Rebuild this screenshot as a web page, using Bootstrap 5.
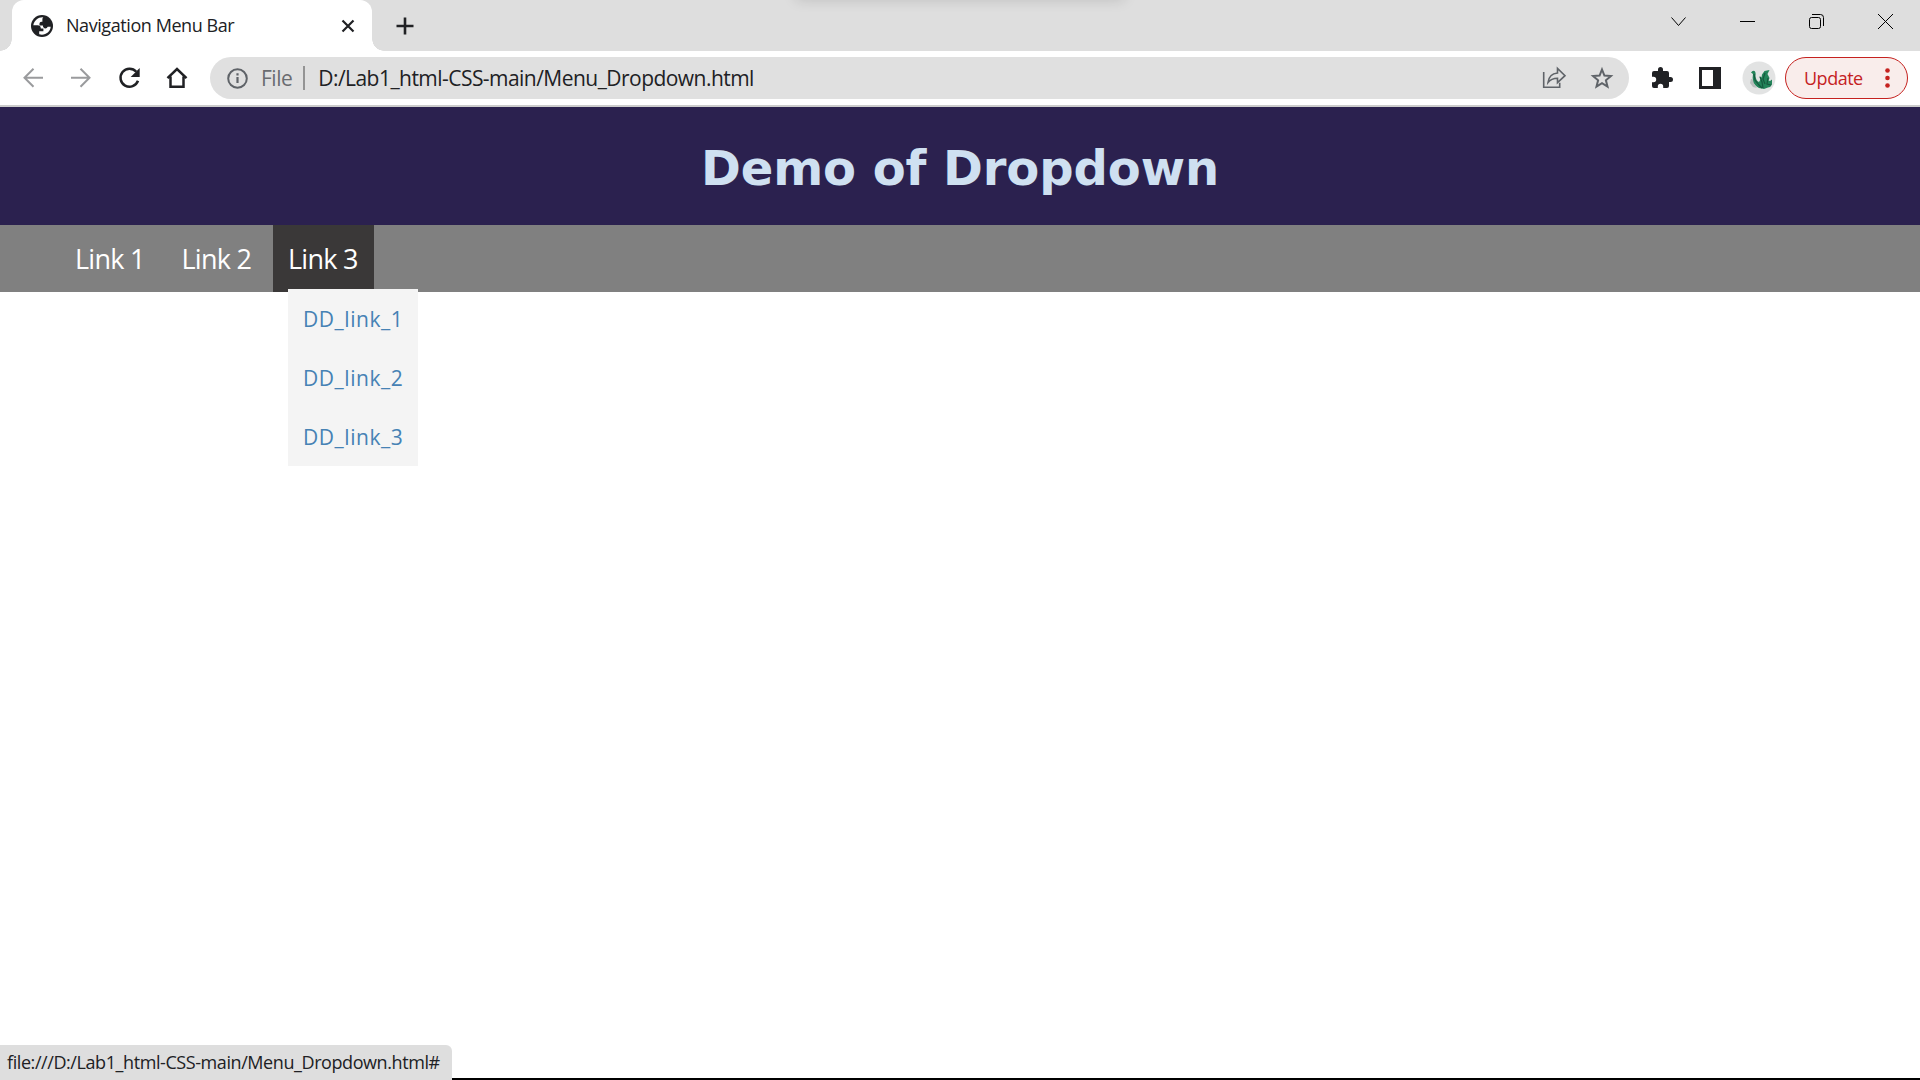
<!DOCTYPE html>
<html lang="en">
<head>
<meta charset="utf-8">
<title>Navigation Menu Bar</title>
<link href="https://cdn.jsdelivr.net/npm/bootstrap@5.3.0/dist/css/bootstrap.min.css" rel="stylesheet">
<style>
body{height:1080px;overflow:hidden;background:#fff;font-family:"Open Sans","Noto Sans",sans-serif;color:#202124}
svg{display:block;flex:none;overflow:visible}
.tabstrip{height:51px;background:#dedede}
.top-shade{left:796px;top:-20px;width:328px;height:20px;box-shadow:0 0 14px rgba(0,0,0,.14)}
.browser-tab{width:360px;margin-left:12px;background:#fff;border-radius:12px 12px 0 0;padding:0 18px 0 19px}
.browser-tab::before,.browser-tab::after{content:"";position:absolute;bottom:0;width:12px;height:12px}
.browser-tab::before{left:-12px;background:radial-gradient(circle at 0 0,transparent 11.5px,#fff 12px)}
.browser-tab::after{right:-12px;background:radial-gradient(circle at 100% 0,transparent 11.5px,#fff 12px)}
.tab-title{font-size:18px;line-height:24px;margin-left:13px;padding-bottom:1px;letter-spacing:-.43px}
.new-tab{margin-left:24px}
.win-controls{gap:54px;padding:0 27px 8px 0}
.toolbar{height:56px;border-bottom:2px solid #ccc;padding:6px 12px 6px 21px}
.tool-nav{gap:24px;margin-right:21px}
.omnibox{width:1419px;height:42px;background:#e0e0e0;border-radius:21px;padding:0 15px}
.scheme,.address{font-size:21px;line-height:28px}
.scheme{color:#6a6c70;margin-left:12px;letter-spacing:-.5px}
.divide{width:2px;height:24px;background:#949494;margin:0 13px 0 11px}
.address{letter-spacing:-.54px}
.avatar-pic{margin:0 9px 0 20px}
.update-btn{width:123px;height:42px;border:1.5px solid #c5221f;border-radius:21px;background:#f9edeb;color:#c5221f;font-size:18px;line-height:24px;padding:0 17px 0 18px}
.update-label{letter-spacing:-.5px;padding-bottom:1px}
.demo-head{height:118px;background:#2b214f;color:#cfe0f1}
.demo-head h1{font:bold 48px/58px "DejaVu Sans",sans-serif;margin:3px 0 0;letter-spacing:-.08px}
.menu-bar{height:67px;background:#808080;padding-left:60px;gap:5.5px}
.menu-item{width:101px}
.menu-item>a{color:#fff;font-size:27px;font-weight:500;line-height:68px;height:67px;padding-left:15px;letter-spacing:-.75px}
.menu-item.is-open{background:#3a3838}
.sub-menu{left:15px;top:64px;width:130px;background:#f4f4f4;z-index:2}
.sub-menu a{height:59px;line-height:61px;padding-left:15px;color:#4682b4;font-size:21px;letter-spacing:.55px}
.status-bubble{width:452px;height:35px;background:#dedede;border-radius:0 6px 0 0;font-size:18px;line-height:35px;padding-left:7px;letter-spacing:-.42px}
.edge-line{height:2px;background:#000}
</style>
<script src="https://cdn.jsdelivr.net/npm/bootstrap@5.3.0/dist/js/bootstrap.bundle.min.js"></script>
</head>
<body class="d-flex flex-column text-nowrap">
<header>
  <div class="tabstrip d-flex align-items-stretch position-relative overflow-hidden">
    <div class="top-shade position-absolute"></div>
    <div class="browser-tab d-flex align-items-center position-relative">
      <svg width="22" height="22" viewBox="0 0 22 22"><circle cx="11" cy="11" r="11" fill="#202124"/><path d="M12.300 2.300C7.500 1.900 3.200 5.300 2.300 10.200H6.500q3.300 0 3.300 3.300h2.600v2.700H8.200v3.100C13.800 21 19.200 17.300 19.700 11.800h-3q-.7 1.600-2.200 1.600-2.600 0-2.600-2.800H8.600q-.8-3.500 2-3.800h.8V4.200q0-1.200.9-1.900z" fill="#fff"/></svg>
      <span class="tab-title">Navigation Menu Bar</span>
      <svg class="ms-auto" width="12" height="12" viewBox="0 0 12 12"><path d="M.5.5l11 11m0-11l-11 11" stroke="#202124" stroke-width="2.2"/></svg>
    </div>
    <svg class="new-tab align-self-center" width="18" height="18" viewBox="0 0 18 18"><path d="M9 .5v17M.5 9h17" stroke="#202124" stroke-width="2.6"/></svg>
    <div class="win-controls d-flex align-items-center ms-auto">
      <svg width="15" height="15" viewBox="0 0 15 15"><path d="M.5 3.500l7 8 7-8" fill="none" stroke="#000" stroke-width="1"/></svg>
      <svg width="15" height="15" viewBox="0 0 15 15"><path d="M0 7.500h15" stroke="#000"/></svg>
      <svg width="15" height="15" viewBox="0 0 15 15"><rect x=".5" y="3.500" width="11" height="11" rx="2" fill="none" stroke="#000"/><path d="M3 .5h8.500q3 0 3 3V12" fill="none" stroke="#000"/></svg>
      <svg width="15" height="15" viewBox="0 0 15 15"><path d="M0 0l15 15M15 0L0 15" stroke="#000"/></svg>
    </div>
  </div>
  <div class="toolbar d-flex align-items-center">
    <div class="tool-nav d-flex align-items-center">
      <svg width="24" height="24" viewBox="0 0 24 24"><path d="M22 11.700H3.500M12.500 2.700l-9 9 9 9" fill="none" stroke="#9a9b9d" stroke-width="2"/></svg>
      <svg width="24" height="24" viewBox="0 0 24 24"><path d="M2 11.700h18.500M11.500 2.700l9 9-9 9" fill="none" stroke="#9a9b9d" stroke-width="2"/></svg>
      <svg width="24" height="24" viewBox="-1 0 24 24"><path d="M20 14.800A9 9 0 1 1 18.300 5.800" fill="none" stroke="#202124" stroke-width="2.500"/><path d="M21.700 2v9h-9z" fill="#202124"/></svg>
      <svg width="24" height="24" viewBox="0 0 24 24"><path d="M2.500 12.200L12 3l9.500 9.200M5.500 10.500v10.300h13V10.500" fill="none" stroke="#202124" stroke-width="2.500"/></svg>
    </div>
    <div class="omnibox d-flex align-items-center">
      <svg width="24" height="24" viewBox="0 0 24 24"><circle cx="12.500" cy="12.500" r="9.300" fill="none" stroke="#5f6368" stroke-width="2"/><path d="M12.500 11v6M12.500 7.300v2.200" stroke="#5f6368" stroke-width="2.200"/></svg>
      <span class="scheme">File</span><span class="divide"></span><span class="address">D:/Lab1_html-CSS-main/Menu_Dropdown.html</span>
      <div class="d-flex align-items-center gap-4 ms-auto">
        <svg width="24" height="24" viewBox="0 0 24 24"><path d="M1.700 6v15.300h16v-4.500" fill="none" stroke="#5f6368" stroke-width="1.600"/><path d="M6 16.500C6.700 10.700 10 7.500 15.500 7V2.500l7.500 7.200-7.500 7v-4.500C11 12.200 8.300 13.500 6 16.500z" fill="none" stroke="#5f6368" stroke-width="1.600"/></svg>
        <svg width="24" height="24" viewBox="0 0 24 24"><path d="M12 3.500l2.400 6.100 6.500.5-5 4.200 1.600 6.300-5.500-3.500-5.500 3.500 1.600-6.300-5-4.200 6.500-.5z" fill="none" stroke="#5f6368" stroke-width="2"/></svg>
      </div>
    </div>
    <div class="d-flex align-items-center gap-4 ms-auto">
      <svg width="24" height="24" viewBox="0 0 24 24"><path d="M20.500 11H19V7q0-2-2-2h-4V3.500a2.500 2.500 0 0 0-5 0V5H4Q2 5 2 7v3.800h1.500a2.700 2.700 0 0 1 0 5.400H2V20q0 2 2 2h3.800v-1.500a2.700 2.700 0 0 1 5.400 0V22H17q2 0 2-2v-4h1.500a2.500 2.500 0 0 0 0-5z" fill="#202124"/></svg>
      <svg width="24" height="24" viewBox="0 0 24 24"><path fill-rule="evenodd" d="M1 1h22v22H1zM4 4v16h11V4z" fill="#202124"/></svg>
    </div>
    <svg class="avatar-pic" width="34" height="34" viewBox="0 0 34 34"><circle cx="17" cy="17" r="16.500" fill="#e2e3e3"/><path d="M9 18l4 1-1 4 3 4-4-1-3-4z" fill="#b9bdbd"/><path d="M9 11.500q1.500-2.300 3.500-1.500 1.500 1 1 5 .5 5 3.500 6l1.500-2.500-1-3.500 2 1.500.5-3 2.500-3.500 5-1-2 4 2 4-1 2.500 1.500.5 2-1.500v5q-1 2.500-4 3l-4 1.500-5-1q-4.500-2.500-5.500-6-1.500-4-.5-8z" fill="#23845a"/><path d="M18 16l2 5 1 6M23 12l-2 6 2 5M26 17l-1 6 4 1M12 13l1 6 4 5 3 3" fill="none" stroke="#17593f" stroke-width="1.200"/></svg>
    <button class="update-btn d-flex align-items-center justify-content-between"><span class="update-label">Update</span><svg width="5" height="20" viewBox="0 0 5 20"><g fill="#c5221f"><circle cx="2.500" cy="2.500" r="2.300"/><circle cx="2.500" cy="10" r="2.300"/><circle cx="2.500" cy="17.500" r="2.300"/></g></svg></button>
  </div>
</header>
<main class="flex-grow-1">
  <div class="demo-head d-flex align-items-center justify-content-center"><h1>Demo of Dropdown</h1></div>
  <nav class="menu-bar d-flex">
    <div class="menu-item"><a class="d-block text-decoration-none" href="#">Link 1</a></div>
    <div class="menu-item"><a class="d-block text-decoration-none" href="#">Link 2</a></div>
    <div class="menu-item is-open position-relative"><a class="d-block text-decoration-none" href="#">Link 3</a>
      <div class="sub-menu position-absolute">
        <a class="d-block text-decoration-none" href="#">DD_link_1</a>
        <a class="d-block text-decoration-none" href="#">DD_link_2</a>
        <a class="d-block text-decoration-none" href="#">DD_link_3</a>
      </div>
    </div>
  </nav>
</main>
<footer class="d-flex align-items-end">
  <div class="status-bubble">file:///D:/Lab1_html-CSS-main/Menu_Dropdown.html#</div>
  <div class="edge-line flex-grow-1"></div>
</footer>
</body>
</html>
